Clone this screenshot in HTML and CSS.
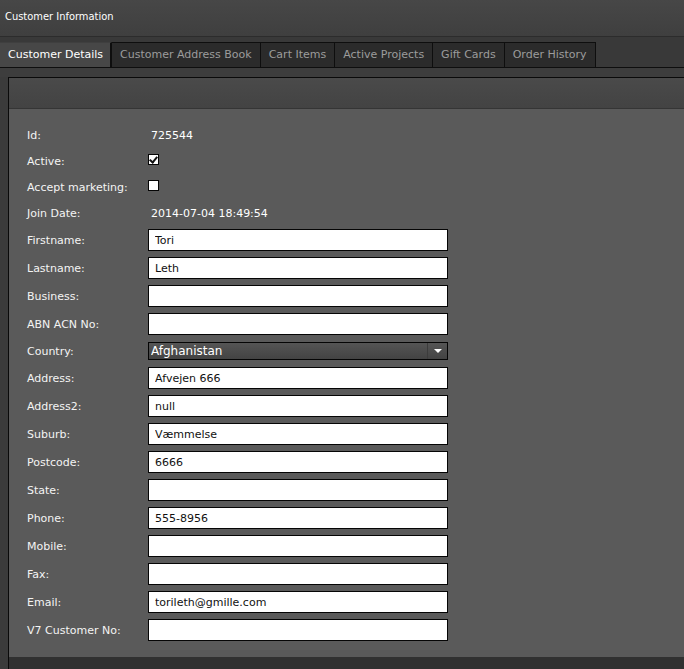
FILE: index.html
```
<!DOCTYPE html>
<html lang="en">
<head>
    <meta charset="UTF-8">
    <title>Customer Information</title>
    <link rel="stylesheet" href="styles.css">
</head>
<body>
    <div class="header">Customer Information</div>
    <div class="tabs">
        <div class="tab active">Customer Details</div>
        <div class="tab">Customer Address Book</div>
        <div class="tab">Cart Items</div>
        <div class="tab">Active Projects</div>
        <div class="tab">Gift Cards</div>
        <div class="tab">Order History</div>
    </div>
    <div class="strip"></div>
    <div class="panel">
        <div class="panel-bar"></div>
        <form class="details">
            <div class="row short"><label>Id:</label><span class="value">725544</span></div>
            <div class="row short"><label>Active:</label><span><input type="checkbox" class="check" checked></span></div>
            <div class="row short"><label>Accept marketing:</label><span><input type="checkbox" class="check"></span></div>
            <div class="row short"><label>Join Date:</label><span class="value">2014-07-04 18:49:54</span></div>
            <div class="row"><label>Firstname:</label><input type="text" value="Tori"></div>
            <div class="row"><label>Lastname:</label><input type="text" value="Leth"></div>
            <div class="row"><label>Business:</label><input type="text" value=""></div>
            <div class="row"><label>ABN ACN No:</label><input type="text" value=""></div>
            <div class="row country"><label>Country:</label>
                <div class="select-wrap">
                    <select>
                        <option>Afghanistan</option>
                        <option>Australia</option>
                        <option>Denmark</option>
                    </select>
                    <span class="arrow"></span>
                </div>
            </div>
            <div class="row"><label>Address:</label><input type="text" value="Afvejen 666"></div>
            <div class="row"><label>Address2:</label><input type="text" value="null"></div>
            <div class="row"><label>Suburb:</label><input type="text" value="Væmmelse"></div>
            <div class="row"><label>Postcode:</label><input type="text" value="6666"></div>
            <div class="row"><label>State:</label><input type="text" value=""></div>
            <div class="row"><label>Phone:</label><input type="text" value="555-8956"></div>
            <div class="row"><label>Mobile:</label><input type="text" value=""></div>
            <div class="row"><label>Fax:</label><input type="text" value=""></div>
            <div class="row"><label>Email:</label><input type="text" value="torileth@gmille.com"></div>
            <div class="row"><label>V7 Customer No:</label><input type="text" value=""></div>
        </form>
        <div class="panel-foot"></div>
    </div>
</body>
</html>
```
FILE: styles.css
```
body {
    margin: 0;
    background: #3b3b3b;
    font-family: "DejaVu Sans", Verdana, sans-serif;
    font-size: 11px;
    color: #f2f2f2;
    height: 669px;
    overflow: hidden;
}
.header {
    height: 36px;
    line-height: 34px;
    padding-left: 5px;
    background: linear-gradient(#474747, #3f3f3f);
    border-bottom: 1px solid #2c2c2c;
    color: #ffffff;
    font-family: "DejaVu Sans Condensed", "DejaVu Sans", sans-serif;
}
.tabs {
    display: flex;
    padding-top: 5px;
    background: #393939;
    border-bottom: 1px solid #0e0e0e;
}
.tab {
    height: 24px;
    line-height: 24px;
    padding: 0 8px;
    background: #2b2b2b;
    border: 1px solid #0e0e0e;
    border-bottom: none;
    border-left: none;
    color: #9c9c9c;
    white-space: nowrap;
}
.tab.active {
    background: #474747;
    color: #ffffff;
    border-right: 2px solid #0e0e0e;
    border-top-color: #3f3f3f;
    padding-right: 7px;
}
.strip {
    height: 9px;
    background: #3d3d3d;
}
.panel {
    margin-left: 8px;
    border-left: 1px solid #0a0a0a;
    border-top: 1px solid #0a0a0a;
}
.panel-bar {
    height: 30px;
    background: linear-gradient(#4a4a4a, #434343);
    border-bottom: 1px solid #353535;
}
.details {
    background: #5a5a5a;
    padding: 13px 0 13px 18px;
    display: flex;
    flex-direction: column;
}
.row {
    display: grid;
    grid-template-columns: 121px 300px;
    align-items: center;
    height: 28px;
}
.row.short,
.row.country {
    height: 26px;
}
label {
    color: #f4f4f4;
}
.value {
    padding-left: 3px;
    color: #ffffff;
}
input[type="text"] {
    box-sizing: border-box;
    width: 300px;
    height: 22px;
    margin: 0;
    padding: 0 6px;
    border: 1px solid #050505;
    border-radius: 0;
    background: #ffffff;
    color: #111111;
    font-family: "DejaVu Sans", Verdana, sans-serif;
    font-size: 11px;
    outline: none;
}
.check {
    appearance: none;
    -webkit-appearance: none;
    box-sizing: border-box;
    width: 11px;
    height: 11px;
    margin: 0;
    border: 1px solid #050505;
    background: #ffffff;
    position: relative;
    display: block;
    top: -2px;
}
.check:checked::after {
    content: "";
    position: absolute;
    left: 2px;
    top: 0px;
    width: 3px;
    height: 6px;
    border-right: 2px solid #111111;
    border-bottom: 2px solid #111111;
    transform: rotate(40deg);
}
.select-wrap {
    position: relative;
    width: 300px;
}
select {
    appearance: none;
    -webkit-appearance: none;
    box-sizing: border-box;
    width: 300px;
    height: 18px;
    margin: 0;
    padding: 0 0 0 2px;
    border: 1px solid #050505;
    border-radius: 0;
    background: linear-gradient(#555555, #434343);
    color: #ffffff;
    font-family: "DejaVu Sans", Verdana, sans-serif;
    font-size: 12px;
    outline: none;
}
.arrow {
    position: absolute;
    right: 1px;
    top: 1px;
    width: 19px;
    height: 16px;
    border-left: 1px solid #3c3c3c;
}
.arrow::after {
    content: "";
    position: absolute;
    left: 6px;
    top: 6px;
    border-left: 4px solid transparent;
    border-right: 4px solid transparent;
    border-top: 4px solid #ffffff;
}
.panel-foot {
    height: 14px;
    background: #313131;
}
```
